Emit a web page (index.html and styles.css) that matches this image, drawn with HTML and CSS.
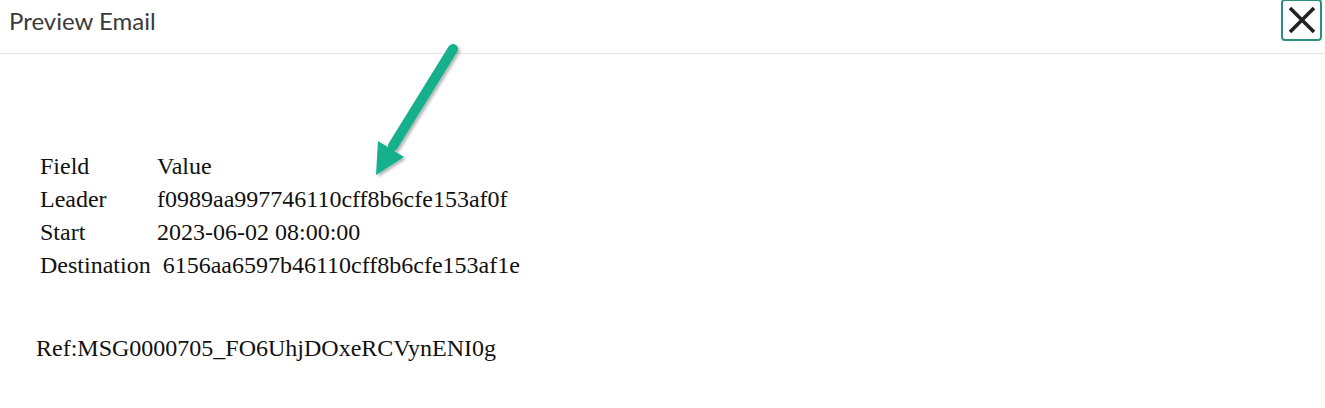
FILE: index.html
```html
<!DOCTYPE html>
<html>
<head>
<meta charset="utf-8">
<link rel="stylesheet" href="styles.css">
</head>
<body>
<div class="dialog">
  <div class="header">
    <div class="title">Preview Email</div>
    <button class="close" aria-label="Close">
      <svg width="30" height="30" viewBox="0 0 30 30"><path d="M3 3 L27 27 M27 3 L3 27" stroke="#222" stroke-width="3.6" fill="none"/></svg>
    </button>
  </div>
  <div class="body">
    <svg class="arrow" width="110" height="150" viewBox="0 0 110 150">
      <defs>
        <filter id="sh" x="-30%" y="-30%" width="160%" height="160%">
          <feDropShadow dx="2" dy="2" stdDeviation="1.5" flood-color="#000" flood-opacity="0.3"/>
        </filter>
      </defs>
      <g filter="url(#sh)" fill="#12b08c" stroke="#12b08c">
        <line x1="89" y1="7" x2="29" y2="104" stroke-width="10" stroke-linecap="round"/>
        <polygon points="12,133 14,99 40,115" stroke="none"/>
      </g>
    </svg>
    <div class="table">
      <div class="row"><span class="label">Field</span><span class="value">Value</span></div>
      <div class="row"><span class="label">Leader</span><span class="value">f0989aa997746110cff8b6cfe153af0f</span></div>
      <div class="row"><span class="label">Start</span><span class="value">2023-06-02 08:00:00</span></div>
      <div class="row"><span class="label label-wide">Destination</span><span class="value">6156aa6597b46110cff8b6cfe153af1e</span></div>
    </div>
    <div class="ref">Ref:MSG0000705_FO6UhjDOxeRCVynENI0g</div>
  </div>
</div>
</body>
</html>
```
FILE: styles.css
```css
html, body {
  margin: 0;
  padding: 0;
  background: #fff;
}
.dialog {
  width: 1325px;
  height: 408px;
  position: relative;
}
.header {
  height: 54px;
  border-bottom: 1px solid #e3e3e3;
  display: flex;
  justify-content: space-between;
  align-items: flex-start;
  box-sizing: border-box;
  padding-left: 9px;
  padding-right: 3px;
}
.title {
  font-family: "Lato", "Open Sans", sans-serif;
  font-size: 24px;
  color: #3a3a3a;
  margin-top: 6px;
}
.close {
  width: 41px;
  height: 42px;
  border: 2px solid #2b8f7f;
  border-radius: 4px;
  background: #fff;
  padding: 0;
  display: flex;
  align-items: center;
  justify-content: center;
  box-sizing: border-box;
  margin-top: -1px;
}
.body {
  position: relative;
  padding: 96px 0 0 40px;
  font-family: "Liberation Serif", "Times New Roman", serif;
  font-size: 24px;
  color: #111;
}
.arrow {
  position: absolute;
  left: 364px;
  top: -12px;
}
.table {
  display: flex;
  flex-direction: column;
}
.row {
  display: flex;
  height: 33px;
  align-items: center;
}
.label {
  width: 117px;
  flex: none;
}
.label-wide {
  width: auto;
  margin-right: 12px;
}
.ref {
  margin-top: 53px;
  margin-left: -4px;
}
```
